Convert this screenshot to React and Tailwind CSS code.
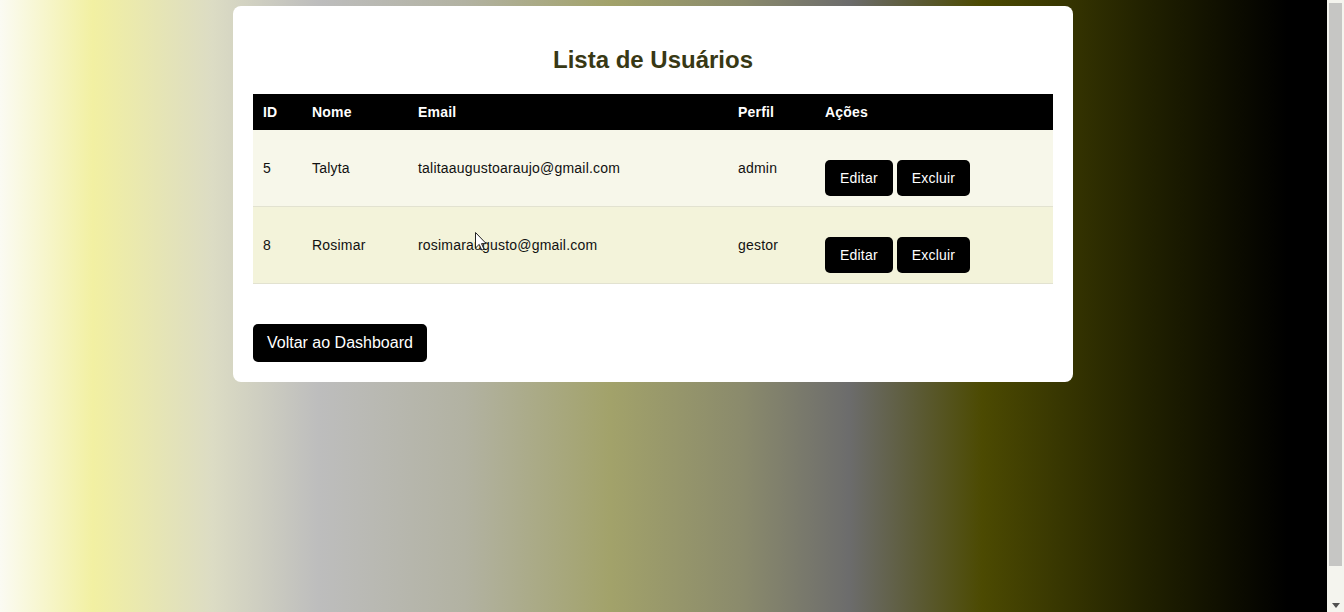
import React from 'react';

const usuarios = [
  { id: 5, nome: 'Talyta', email: 'talitaaugustoaraujo@gmail.com', perfil: 'admin', bg: 'bg-[#f7f7ea]' },
  { id: 8, nome: 'Rosimar', email: 'rosimaraugusto@gmail.com', perfil: 'gestor', bg: 'bg-[#f3f3da]' },
];

const App = () => {
  return (
    <div className="relative flex h-[612px] w-full overflow-hidden font-['Liberation_Sans',Arial,sans-serif]">
      {/* Fundo em degradê */}
      <div className="flex-1 bg-[linear-gradient(to_right,#fbfbf3_0%,#f2f0a2_7%,#dcdcc4_16%,#bdbdbd_24%,#b2b2a2_35%,#a2a26a_46%,#8a8a6c_56%,#6c6c6c_64%,#4c4a02_74%,#222200_86%,#000000_97%)]">
        <div className="ml-[233px] mt-[6px] w-[840px] rounded-lg bg-white p-5">
          <h2 className="my-5 text-center text-2xl font-bold leading-[28px] text-[#383814]">
            Lista de Usuários
          </h2>

          <table className="w-full table-fixed border-collapse text-[14px] leading-4 tracking-[0.2px]">
            <colgroup>
              <col className="w-[49px]" />
              <col className="w-[106px]" />
              <col className="w-[320px]" />
              <col className="w-[87px]" />
              <col />
            </colgroup>
            <thead>
              <tr className="bg-black text-white">
                <th className="p-[10px] text-left font-bold">ID</th>
                <th className="p-[10px] text-left font-bold">Nome</th>
                <th className="p-[10px] text-left font-bold">Email</th>
                <th className="p-[10px] text-left font-bold">Perfil</th>
                <th className="p-[10px] text-left font-bold">Ações</th>
              </tr>
            </thead>
            <tbody>
              {usuarios.map((u) => (
                <tr key={u.id} className={`${u.bg} border-b border-[#e2e2d0] text-[#111]`}>
                  <td className="p-[10px] align-middle">{u.id}</td>
                  <td className="p-[10px] align-middle">{u.nome}</td>
                  <td className="p-[10px] align-middle">{u.email}</td>
                  <td className="p-[10px] align-middle">{u.perfil}</td>
                  <td className="p-[10px] align-middle">
                    <div className="mt-5 flex gap-1">
                      <button className="h-9 rounded-[5px] bg-black px-[15px] text-[14px] tracking-[0.2px] text-white">Editar</button>
                      <button className="h-9 rounded-[5px] bg-black px-[15px] text-[14px] tracking-[0.2px] text-white">Excluir</button>
                    </div>
                  </td>
                </tr>
              ))}
            </tbody>
          </table>

          <button className="mt-10 h-[38px] rounded-[5px] bg-black px-[14px] text-[16px] text-white">
            Voltar ao Dashboard
          </button>
        </div>
      </div>

      {/* Barra de rolagem */}
      <div className="flex w-[17px] flex-col items-center bg-[#f4f4ee] pt-[3px]">
        <div className="h-[563px] w-[13px] bg-[#c6c6c4]"></div>
        <div className="flex-1"></div>
        <svg width="8" height="5" viewBox="0 0 8 5" className="mb-[4px]">
          <path d="M0 0 H8 L4 5 Z" fill="#505050" />
        </svg>
      </div>

      {/* Cursor do mouse */}
      <svg className="absolute left-[475px] top-[232px]" width="12" height="19" viewBox="0 0 12 19">
        <path d="M0.5 0.5 V16 L4.2 12.4 L6.8 18.2 L9 17.2 L6.5 11.6 L11.2 11.6 Z" fill="#fff" stroke="#222" strokeWidth="1" strokeLinejoin="round" />
      </svg>
    </div>
  );
};

export default App;
